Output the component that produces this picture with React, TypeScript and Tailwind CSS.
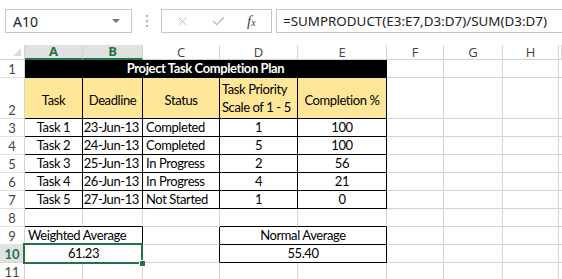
import React from "react";
import { X, Check } from "lucide-react";

const tasks = [
  ["Task 1", "23-Jun-13", "Completed", "1", "100"],
  ["Task 2", "24-Jun-13", "Completed", "5", "100"],
  ["Task 3", "25-Jun-13", "In Progress", "2", "56"],
  ["Task 4", "26-Jun-13", "In Progress", "4", "21"],
  ["Task 5", "27-Jun-13", "Not Started", "1", "0"],
];

const letters = ["C", "D", "E", "F", "G", "H", ""];

function RowHead({ n, active }: { n: number; active?: boolean }) {
  if (active) {
    return (
      <div className="border-r border-b border-[#d4d4d4] bg-[#e1e1e1] text-[#217346] font-bold flex items-end justify-center text-[13px] leading-[16px] tracking-normal">
        {n}
      </div>
    );
  }
  return (
    <div className="border-r border-b border-[#e1e1e1] border-r-[#d4d4d4] text-[#444] flex items-end justify-center text-[13px] leading-[16px] tracking-normal">
      {n}
    </div>
  );
}

// empty cells for columns F..I
function Blank({ from }: { from: number }) {
  const cells = [];
  for (let i = from; i < 10; i++) {
    cells.push(
      <div
        key={i}
        className={i === 9 ? "border-b border-[#d4d4d4]" : "border-r border-b border-[#d4d4d4]"}
      />
    );
  }
  return <>{cells}</>;
}

function Toolbar() {
  return (
    <div className="h-[45px] flex items-start pt-[9px] font-['Noto_Sans',sans-serif]">
      <div className="ml-[5px] w-[127px] h-[24px] border border-[#c6c6c6] flex items-center justify-between pl-[7px] pr-[11px] text-[14px] text-[#222]">
        <span>A10</span>
        <span className="w-0 h-0 border-l-[4px] border-r-[4px] border-t-[4px] border-l-transparent border-r-transparent border-t-[#777]" />
      </div>
      <div className="ml-[14px] mt-[6px] flex flex-col gap-[3px]">
        <span className="w-[2px] h-[2px] bg-[#b0b0b0]" />
        <span className="w-[2px] h-[2px] bg-[#b0b0b0]" />
        <span className="w-[2px] h-[2px] bg-[#b0b0b0]" />
      </div>
      <div className="ml-[13px] w-[111px] h-[24px] border border-[#c6c6c6] flex items-center pl-[14px]">
        <X size={13} strokeWidth={1.5} className="text-[#b4b4b4]" />
        <Check size={15} strokeWidth={2} className="ml-[22px] text-[#b4b4b4]" />
        <span className="ml-[21px] italic font-['Liberation_Serif',serif] text-[15px] text-[#444]">
          f<span className="text-[10px]">x</span>
        </span>
      </div>
      <div className="ml-[4px] flex-1 h-[24px] border border-r-0 border-[#c6c6c6] flex items-center pl-[6px] text-[13.4px] text-[#222] whitespace-nowrap">
        =SUMPRODUCT(E3:E7,D3:D7)/SUM(D3:D7)
      </div>
    </div>
  );
}

export default function App() {
  return (
    <div className="w-[562px] h-[279px] overflow-hidden bg-white">
      <Toolbar />
      <div className="grid grid-cols-[25px_58px_60px_77px_78px_89px_57px_59px_56px_1fr] grid-rows-[15px_18px_41px_repeat(9,18px)] font-['Lato',sans-serif] text-[13px] tracking-[-0.4px] text-black leading-none whitespace-nowrap">
        {/* column headers */}
        <div className="border-r border-b border-[#d4d4d4] relative">
          <span className="absolute right-[3px] bottom-[3px] w-0 h-0 border-l-[8px] border-t-[8px] border-l-transparent border-t-transparent border-r-0 border-b-[8px] border-b-[#dcdcdc]" />
        </div>
        <div className="border-r border-[#d4d4d4] border-b-2 border-b-[#217346] bg-[#e1e1e1] text-[#217346] font-bold text-[13px] tracking-normal flex items-center justify-center font-['Open_Sans',sans-serif]">
          A
        </div>
        <div className="border-r border-[#d4d4d4] border-b-2 border-b-[#217346] bg-[#e1e1e1] text-[#217346] font-bold text-[13px] tracking-normal flex items-center justify-center font-['Open_Sans',sans-serif]">
          B
        </div>
        {letters.map((l, i) => (
          <div
            key={i}
            className="border-r border-b border-[#d4d4d4] text-[#444] text-[13px] tracking-normal flex items-center justify-center font-['Open_Sans',sans-serif]"
          >
            {l}
          </div>
        ))}

        {/* row 1 */}
        <RowHead n={1} />
        <div className="col-span-5 bg-black border-r border-b border-black text-white font-bold flex items-center justify-center">
          Project Task Completion Plan
        </div>
        <Blank from={6} />

        {/* row 2 */}
        <RowHead n={2} />
        <div className="bg-[#ffe699] border-r border-b border-black flex items-center justify-center pt-[4px]">Task</div>
        <div className="bg-[#ffe699] border-r border-b border-black flex items-center justify-center pt-[4px]">Deadline</div>
        <div className="bg-[#ffe699] border-r border-b border-black flex items-center justify-center pt-[4px]">Status</div>
        <div className="bg-[#ffe699] border-r border-b border-black flex flex-col justify-center pl-[2px] leading-[18px]">
          <span>Task Priority</span>
          <span>Scale of 1 - 5</span>
        </div>
        <div className="bg-[#ffe699] border-r border-b border-black flex items-center justify-center pt-[4px]">Completion %</div>
        <Blank from={6} />

        {/* rows 3-7 */}
        {tasks.map((t, i) => (
          <React.Fragment key={t[0]}>
            <RowHead n={i + 3} />
            <div className="border-r border-b border-black flex items-center justify-center">{t[0]}</div>
            <div className="border-r border-b border-black flex items-center justify-end pr-[3px]">{t[1]}</div>
            <div className="border-r border-b border-black flex items-center pl-[3px]">{t[2]}</div>
            <div className="border-r border-b border-black flex items-center justify-center">{t[3]}</div>
            <div className="border-r border-b border-black flex items-center justify-center">{t[4]}</div>
            <Blank from={6} />
          </React.Fragment>
        ))}

        {/* row 8 */}
        <RowHead n={8} />
        <div className="border-r border-b border-[#d4d4d4] border-b-black" />
        <div className="border-r border-b border-[#d4d4d4] border-b-black" />
        <div className="border-r border-b border-[#d4d4d4]" />
        <div className="border-r border-b border-[#d4d4d4] border-b-black" />
        <div className="border-r border-b border-[#d4d4d4] border-b-black" />
        <Blank from={6} />

        {/* row 9 */}
        <RowHead n={9} />
        <div className="col-span-2 border-r border-b border-black flex items-center pl-[3px]">Weighted Average</div>
        <div className="border-r border-b border-[#d4d4d4] border-r-black" />
        <div className="col-span-2 border-r border-b border-black flex items-center justify-center">Normal Average</div>
        <Blank from={6} />

        {/* row 10 */}
        <RowHead n={10} active />
        <div className="col-span-2 relative border-r border-b border-[#d4d4d4] flex items-center justify-center">
          61.23
          <span className="absolute -top-[2px] -left-[2px] -right-[1px] -bottom-[2px] border-2 border-[#217346]" />
          <span className="absolute -right-[4px] -bottom-[5px] w-[7px] h-[7px] bg-[#217346] border border-white" />
        </div>
        <div className="border-r border-b border-[#d4d4d4] border-r-black" />
        <div className="col-span-2 border-r border-b border-black flex items-center justify-center">55.40</div>
        <Blank from={6} />

        {/* row 11 */}
        <RowHead n={11} />
        <Blank from={1} />
      </div>
    </div>
  );
}
